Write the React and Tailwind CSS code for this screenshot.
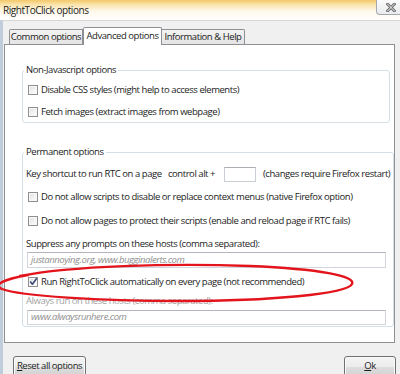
import React from "react";

function Checkbox({ checked }) {
  return (
    <span className="relative ml-[2px] mr-[3px] flex h-[10px] w-[10px] shrink-0 items-center justify-center border border-[#8f8f8f] bg-[linear-gradient(135deg,#dedede_0%,#f4f4f4_60%,#ffffff_100%)] shadow-[inset_0_0_0_1px_#f7f7f7]">
      {checked && (
        <svg width="9" height="9" viewBox="0 0 9 9" className="absolute left-[0px] top-[-1px]">
          <path d="M1.2 4.6 L3.4 7.2 L7.8 1.2" fill="none" stroke="#3a4a7a" strokeWidth="1.6" strokeLinejoin="round" />
        </svg>
      )}
    </span>
  );
}

function CbRow({ checked, children, className = "" }) {
  return (
    <div className={"flex h-[16px] items-center whitespace-nowrap " + className}>
      <Checkbox checked={checked} />
      <span>{children}</span>
    </div>
  );
}

function Button({ children, className = "" }) {
  return (
    <div className={"flex h-[22px] justify-center rounded-[3px] border border-[#707070] bg-[linear-gradient(to_bottom,#f4f4f4_0%,#ececec_48%,#dddddd_52%,#d0d0d0_100%)] pt-[1px] leading-[16px] shadow-[inset_0_0_0_1px_#fbfbfb] " + className}>
      {children}
    </div>
  );
}

export default function App() {
  return (
    <div className="relative flex h-[374px] w-[400px] flex-col overflow-hidden bg-white font-['Open_Sans',sans-serif] text-[9.5px] tracking-[-0.45px] text-[#1c1c1c]">
      {/* title bar */}
      <div className="flex h-[20px] shrink-0 items-start justify-between bg-[linear-gradient(to_bottom,#f3c86a_0%,#f9e2a8_22%,#fff8ea_55%,#ffffff_100%)]">
        <div className="pl-[3px] pt-[2px] text-[10px] leading-[16px]">RightToClick options</div>
        <div className="flex h-[15px] w-[24px] items-center justify-center rounded-bl-[4px] border-b border-l border-[#a3a8ae] bg-[linear-gradient(to_bottom,#fbfbfb,#e9ebee)]">
          <svg width="10" height="9" viewBox="0 0 10 9" className="ml-[4px]">
            <path d="M1.5 1 L8.5 8 M8.5 1 L1.5 8" stroke="#6a6a6a" strokeWidth="2.8" strokeLinecap="square" />
            <path d="M1.5 1 L8.5 8 M8.5 1 L1.5 8" stroke="#f4f4f4" strokeWidth="1" strokeLinecap="square" />
          </svg>
        </div>
      </div>

      {/* body */}
      <div className="flex flex-1 flex-col border-l-[3px] border-t border-[#bfcddb] border-t-[#d6d6d6] bg-[#f0f0f0] pl-[1px]">
        {/* tabs */}
        <div className="mb-[-1px] flex items-end pl-[5px] pt-[6px]">
          <div className="mb-[1px] flex h-[15px] w-[74px] items-center justify-center rounded-tl-[2px] border border-b-0 border-[#8e9096] bg-[linear-gradient(to_bottom,#f3f3f3,#e4e4e4)] leading-[14px]">
            Common options
          </div>
          <div className="relative z-10 flex h-[18px] w-[79px] items-start justify-center rounded-t-[2px] border border-b-0 border-[#8e9096] bg-white pt-[1px] leading-[14px]">
            Advanced options
          </div>
          <div className="mb-[1px] flex h-[15px] w-[83px] items-center justify-center rounded-tr-[2px] border border-b-0 border-l-0 border-[#8e9096] bg-[linear-gradient(to_bottom,#f3f3f3,#e4e4e4)] leading-[14px]">
            Information &amp; Help
          </div>
        </div>

        {/* panel */}
        <div className="flex h-[299px] w-[391px] flex-col border border-[#8e9096] bg-white pl-[17px] pr-[4px]">
          <fieldset className="mt-[17px] rounded-[3px] border border-[#d5dfe5] pb-[2px] pl-[3px] pr-[3px]">
            <legend className="ml-[-2px] px-[2px] leading-[16px]">Non-Javascript options</legend>
            <CbRow className="mt-[4px]">Disable CSS styles (might help to access elements)</CbRow>
            <CbRow className="mt-[6px]">Fetch images (extract images from webpage)</CbRow>
          </fieldset>

          <fieldset className="mt-[21px] rounded-[3px] border border-[#d5dfe5] pb-[1px] pl-[3px] pr-[3px]">
            <legend className="ml-[-2px] px-[2px] leading-[16px]">Permanent options</legend>
            <div className="mt-[6px] flex h-[16px] items-center whitespace-nowrap">
              <span className="w-[142px]">Key shortcut to run RTC on a page</span>
              <span className="w-[56px]">control alt +</span>
              <span className="h-[15px] w-[32px] border border-[#c9ced6] border-t-[#abadb3] bg-white"></span>
              <span className="ml-[7px]">(changes require Firefox restart)</span>
            </div>
            <CbRow className="mt-[7px]">Do not allow scripts to disable or replace context menus (native Firefox option)</CbRow>
            <CbRow className="mt-[8px]">Do not allow pages to protect their scripts (enable and reload page if RTC fails)</CbRow>
            <div className="mt-[8px] h-[14px] leading-[14px]">Suppress any prompts on these hosts (comma separated):</div>
            <div className="ml-[1px] mt-[1px] flex h-[16px] w-[359px] items-center border border-[#d2d6dc] border-t-[#b3b6bc] bg-white pl-[3px] italic text-[#8f8f8f]">
              justannoying.org, www.bugginalerts.com
            </div>
            <CbRow checked className="mt-[6px]">Run RightToClick automatically on every page (not recommended)</CbRow>
            <div className="mt-[4px] h-[14px] leading-[14px] text-[#a3a3a3]">Always run on these hosts (comma separated):</div>
            <div className="ml-[1px] mt-[2px] flex h-[15px] w-[359px] items-center border border-[#d2d6dc] border-t-[#b3b6bc] bg-white pl-[3px] italic text-[#8f8f8f]">
              www.alwaysrunhere.com
            </div>
          </fieldset>
        </div>

        {/* buttons */}
        <div className="mt-[13px] flex justify-between pl-[9px] pr-[4px]">
          <Button className="w-[73px]">
            <span><span className="underline">R</span>eset all options</span>
          </Button>
          <Button className="w-[52px]">
            <span><span className="underline">O</span>k</span>
          </Button>
        </div>
      </div>

      {/* red hand-drawn ellipse overlay */}
      <svg className="pointer-events-none absolute left-0 top-0" width="400" height="374" viewBox="0 0 400 374">
        <path
          d="M20 276 C 70 266, 170 263, 250 266 C 320 269, 356 276, 352 284 C 347 294, 270 301, 180 301 C 100 301, 20 296, 2 289 C -8 284, 6 279, 28 275"
          fill="none"
          stroke="#e3141c"
          strokeWidth="2.4"
          strokeLinecap="round"
        />
      </svg>
    </div>
  );
}
